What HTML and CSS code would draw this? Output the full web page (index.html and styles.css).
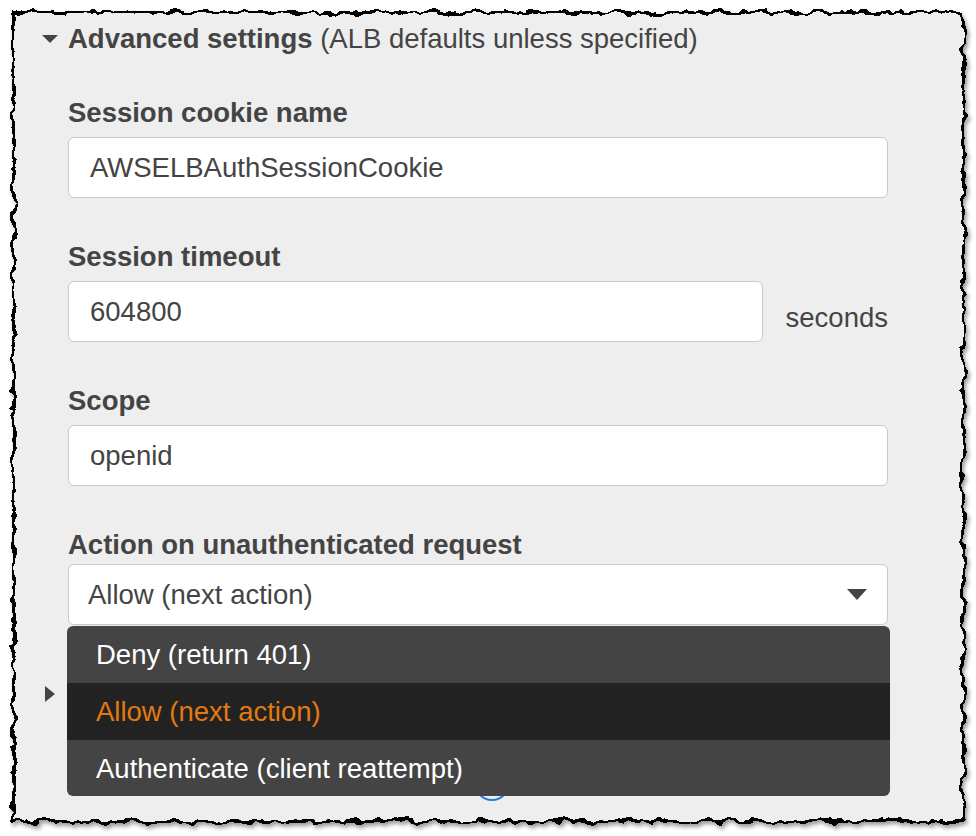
FILE: index.html
```html
<!DOCTYPE html>
<html lang="en">
<head>
  <meta charset="UTF-8">
  <title>Advanced settings</title>
  <link rel="stylesheet" href="styles.css">
</head>
<body>
  <svg class="defs" width="0" height="0" aria-hidden="true">
    <filter id="torn" x="-3%" y="-3%" width="106%" height="106%">
      <feTurbulence type="fractalNoise" baseFrequency="0.07" numOctaves="3" seed="7" result="noise"/>
      <feDisplacementMap in="SourceGraphic" in2="noise" scale="11" xChannelSelector="R" yChannelSelector="G"/>
    </filter>
  </svg>

  <div class="sheet">
    <div class="paper"></div>

    <div class="panel">
      <div class="section-title">
        <svg class="caret" width="16" height="8" viewBox="0 0 16 8"><path d="M0 0h16L8 8z"/></svg>
        <span><b>Advanced settings</b> (ALB defaults unless specified)</span>
      </div>

      <div class="fields">
        <div class="field">
          <label>Session cookie name</label>
          <div class="input">AWSELBAuthSessionCookie</div>
        </div>

        <div class="field">
          <label>Session timeout</label>
          <div class="row">
            <div class="input short">604800</div>
            <span class="unit">seconds</span>
          </div>
        </div>

        <div class="field">
          <label>Scope</label>
          <div class="input">openid</div>
        </div>

        <div class="field select-field">
          <label>Action on unauthenticated request</label>
          <div class="select">
            <span>Allow (next action)</span>
            <svg width="20" height="11" viewBox="0 0 20 11"><path d="M0 0h20L10 11z"/></svg>
          </div>
          <ul class="menu">
            <li>Deny (return 401)</li>
            <li class="active">Allow (next action)</li>
            <li>Authenticate (client reattempt)</li>
          </ul>
        </div>
      </div>

      <div class="section-title collapsed">
        <svg class="arrow" width="10" height="16" viewBox="0 0 10 16"><path d="M0 0l10 8-10 8z"/></svg>
      </div>

      <div class="spinner"></div>
    </div>
  </div>
</body>
</html>
```

FILE: styles.css
```css
body {
  margin: 0;
  background: #fff;
  font-family: "Liberation Sans", Arial, sans-serif;
  color: #444;
}
.defs {
  position: absolute;
}
.sheet {
  position: relative;
  width: 976px;
  height: 836px;
  overflow: hidden;
}
.paper {
  position: absolute;
  left: 12px;
  top: 11px;
  right: 11px;
  bottom: 13px;
  background: #eee;
  border: 3px solid #000;
  filter: url(#torn) drop-shadow(2px 3px 2px rgba(0, 0, 0, 0.4));
}
.panel {
  position: relative;
  padding: 23px 0 0 42px;
}
.section-title {
  display: flex;
  align-items: center;
  gap: 10px;
  font-size: 27.5px;
  line-height: 32px;
}
.section-title svg {
  fill: #444;
}
.fields {
  margin-left: 26px;
  width: 820px;
}
.field {
  margin-top: 42px;
}
.field + .field {
  margin-top: 43px;
}
.field label {
  display: block;
  font-size: 27.5px;
  line-height: 32px;
  font-weight: bold;
  margin-bottom: 8px;
}
.input, .select {
  box-sizing: border-box;
  height: 61px;
  background: #fff;
  border: 1px solid #c9c9c9;
  border-radius: 6px;
  padding: 0 20px 0 21px;
  font-size: 27.5px;
  line-height: 59px;
  color: #444;
}
.row {
  display: flex;
}
.input.short {
  width: 695px;
}
.unit {
  align-self: flex-end;
  margin: 0 0 8px 23px;
  font-size: 27.5px;
  line-height: 32px;
}
.select-field {
  position: relative;
}
.select-field label {
  margin-bottom: 3px;
}
.select {
  display: flex;
  justify-content: space-between;
  align-items: center;
  padding-left: 19px;
}
.select svg {
  fill: #444;
}
.menu {
  position: absolute;
  z-index: 2;
  top: 100%;
  left: -1px;
  width: 823px;
  margin: 1px 0 0;
  padding: 0;
  list-style: none;
  background: #444;
  border-radius: 6px;
  overflow: hidden;
}
.menu li {
  height: 57px;
  line-height: 57px;
  padding-left: 29px;
  font-size: 27.5px;
  color: #fff;
}
.menu li:last-child {
  height: 56px;
}
.menu li.active {
  background: #222;
  color: #e47911;
}
.collapsed {
  margin-top: 53px;
  height: 32px;
  padding-left: 3px;
}
.spinner {
  width: 32px;
  height: 32px;
  margin: 55px 0 0 432px;
  border: 2px solid #2a7bd4;
  border-radius: 50%;
}
```
